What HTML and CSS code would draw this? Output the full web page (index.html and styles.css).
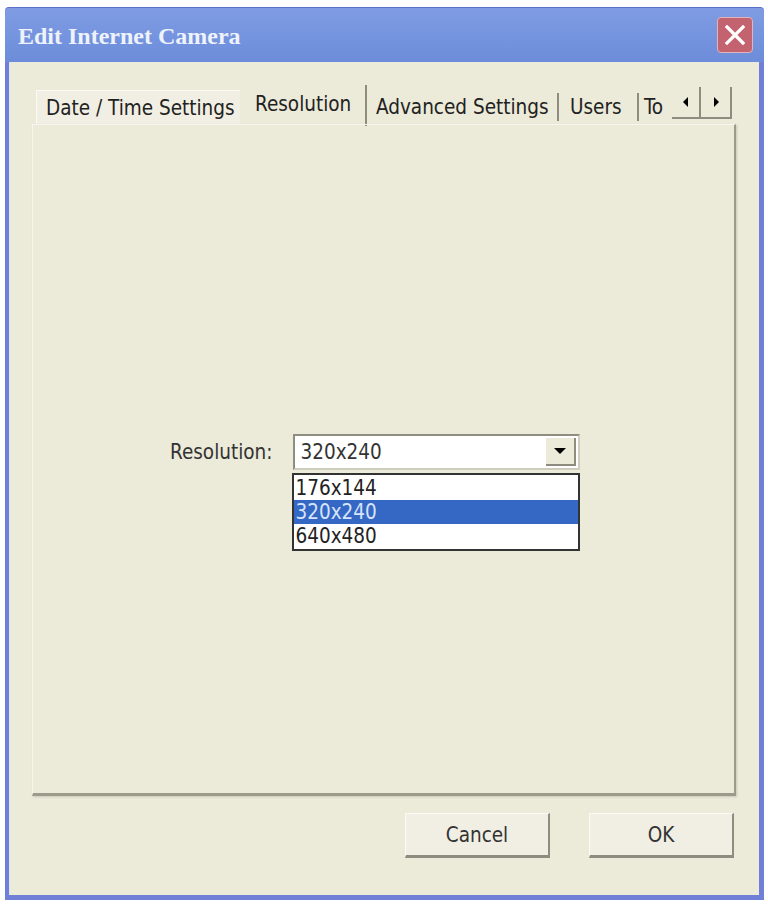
FILE: index.html
```html
<!DOCTYPE html>
<html lang="en">
  <head>
    <meta charset="UTF-8" />
    <meta name="viewport" content="width=device-width, initial-scale=1.0" />
    <title>Edit Internet Camera</title>
    <link rel="stylesheet" href="styles.css">
  </head>
  <body>
    <div class="window">

      <div class="title-bar">
        <span class="title-text">Edit Internet Camera</span>
        <button class="close-but">
          <svg width="22" height="22" viewBox="0 0 22 22">
            <path d="M3 3 L19 19 M19 3 L3 19" stroke="white" stroke-width="3.2" stroke-linecap="square"/>
          </svg>
        </button>
      </div>

      <div class="win-body">

        <div class="tab-row">
          <div class="tab tab-first">Date / Time Settings</div>
          <div class="tab tab-active">Resolution</div>
          <div class="tab tab-sep tab-adv">Advanced Settings</div>
          <div class="tab tab-sep tab-users">Users</div>
          <div class="tab tab-cut">To</div>
          <div class="tab-scroll">
            <button class="scroll-but">
              <svg width="8" height="10" viewBox="0 0 8 10"><path d="M6 0 L6 10 L1 5 Z" fill="black"/></svg>
            </button>
            <button class="scroll-but">
              <svg width="8" height="10" viewBox="0 0 8 10"><path d="M2 0 L2 10 L7 5 Z" fill="black"/></svg>
            </button>
          </div>
        </div>

        <div class="tab-panel">
          <div class="res-row">
            <span class="res-label">Resolution:</span>
            <div class="combo">
              <div class="combo-box">
                <span class="combo-text">320x240</span>
                <span class="combo-drop">
                  <svg width="12" height="7" viewBox="0 0 12 7"><path d="M0 0 L12 0 L6 6 Z" fill="black"/></svg>
                </span>
              </div>
              <div class="combo-list">
                <div class="combo-item">176x144</div>
                <div class="combo-item picked">320x240</div>
                <div class="combo-item">640x480</div>
              </div>
            </div>
          </div>
        </div>

        <div class="but-row">
          <button class="dlg-but">Cancel</button>
          <button class="dlg-but">OK</button>
        </div>

      </div>
    </div>
  </body>
</html>
```

FILE: styles.css
```css
body{
  margin: 0;
  background-color: white;
  font-family: "DejaVu Sans Condensed", "DejaVu Sans", sans-serif;
  color: #222;
}
.window{
  margin: 7px 0 0 5px;
  width: 759px;
  height: 893px;
  box-sizing: border-box;
  display: flex;
  flex-direction: column;
  background-color: #6f80d6;
  border-top: 1px solid #5a6fc8;
  padding: 0 5px 5px 4px;
  border-radius: 4px 4px 0 0;
}
.title-bar{
  height: 54px;
  margin: 0 -5px 0 -4px;
  padding: 0 11px 0 13px;
  display: flex;
  align-items: center;
  justify-content: space-between;
  background: linear-gradient(#7f9ce2, #7493de 60%, #6d8cd9);
  border-radius: 4px 4px 0 0;
}
.title-text{
  font-family: "Liberation Serif", serif;
  font-weight: bold;
  font-size: 24px;
  color: #eef2fb;
  margin-top: 2px;
}
.close-but{
  width: 36px;
  height: 36px;
  padding: 0;
  display: flex;
  align-items: center;
  justify-content: center;
  background-color: #c3636f;
  border: 1px solid #e3b3bb;
  border-radius: 4px;
}
.win-body{
  flex: 1;
  display: flex;
  flex-direction: column;
  background-color: #ecead9;
  border-left: 1px solid #dfe3f7;
  padding: 0 23px 0 22px;
}
.tab-row{
  height: 62px;
  display: flex;
  align-items: flex-end;
  padding-left: 4px;
}
.tab{
  height: 34px;
  box-sizing: border-box;
  display: flex;
  align-items: center;
  font-size: 20.5px;
  white-space: nowrap;
  overflow: hidden;
}
.tab-first{
  background-color: #f1efe3;
  border-top: 1px solid #fbfaf4;
  border-left: 1px solid #fbfaf4;
  width: 204px;
  padding-left: 9px;
}
.tab-active{
  width: 124px;
  height: 41px;
  margin-bottom: -2px;
  margin-left: 3px;
  padding: 0 0 4px 12px;
  background-color: #ecead9;
  border-right: 2px solid #8d8c7e;
}
.tab-sep{
  border-right: 2px solid #8d8c7e;
  height: 28px;
  margin-bottom: 3px;
}
.tab-adv{
  width: 192px;
  padding-left: 9px;
}
.tab-users{
  width: 80px;
  padding-left: 11px;
}
.tab-cut{
  width: 33px;
  padding: 0 0 0 5px;
  height: 28px;
  margin-bottom: 3px;
}
.tab-scroll{
  display: flex;
  margin-bottom: 5px;
  height: 30px;
  border-bottom: 2px solid #8d8c7e;
  border-right: 2px solid #8d8c7e;
}
.scroll-but{
  width: 29px;
  height: 30px;
  padding: 0;
  display: flex;
  align-items: center;
  justify-content: center;
  background-color: #ecead9;
  border: none;
  border-right: 2px solid #8d8c7e;
}
.scroll-but:last-child{
  border-right: none;
}
.tab-panel{
  height: 672px;
  box-sizing: border-box;
  border-top: 1px solid #f7f6ee;
  border-left: 1px solid #f7f6ee;
  border-right: 2px solid #9c9b8b;
  border-bottom: 3px solid #9c9b8b;
  box-shadow: 1px 1px 2px #c9c7b6;
  padding: 309px 0 0 137px;
}
.res-row{
  display: flex;
  align-items: center;
  gap: 20px;
}
.res-label{
  font-size: 20.5px;
  color: #333;
}
.combo{
  position: relative;
}
.combo-box{
  width: 287px;
  height: 36px;
  box-sizing: border-box;
  display: flex;
  align-items: center;
  justify-content: space-between;
  background-color: white;
  border: 2px solid #8e8d80;
  border-right-color: #cfcdbd;
  border-bottom-color: #cfcdbd;
  padding: 0 2px 0 6px;
}
.combo-text{
  font-size: 20.5px;
  color: #333;
}
.combo-drop{
  width: 30px;
  height: 28px;
  box-sizing: border-box;
  display: flex;
  align-items: center;
  justify-content: center;
  background-color: #ecead9;
  border-right: 2px solid #8d8c7e;
  border-bottom: 2px solid #8d8c7e;
}
.combo-list{
  position: absolute;
  left: -1px;
  top: 39px;
  width: 288px;
  box-sizing: border-box;
  background-color: white;
  border: 2px solid #333;
  padding: 1px 0;
}
.combo-item{
  height: 24px;
  padding-left: 2px;
  font-size: 20.5px;
  line-height: 24px;
  color: #222;
}
.picked{
  background-color: #3468c4;
  color: #d8e4fb;
}
.but-row{
  display: flex;
  justify-content: flex-end;
  gap: 39px;
  margin-top: 17px;
  margin-right: 2px;
}
.dlg-but{
  width: 145px;
  height: 45px;
  font-family: "DejaVu Sans Condensed", "DejaVu Sans", sans-serif;
  font-size: 20.5px;
  color: #333;
  background-color: #f1efe3;
  border: none;
  border-top: 1px solid #fbfaf4;
  border-left: 1px solid #fbfaf4;
  border-right: 2px solid #8d8c7e;
  border-bottom: 3px solid #8d8c7e;
}
```
